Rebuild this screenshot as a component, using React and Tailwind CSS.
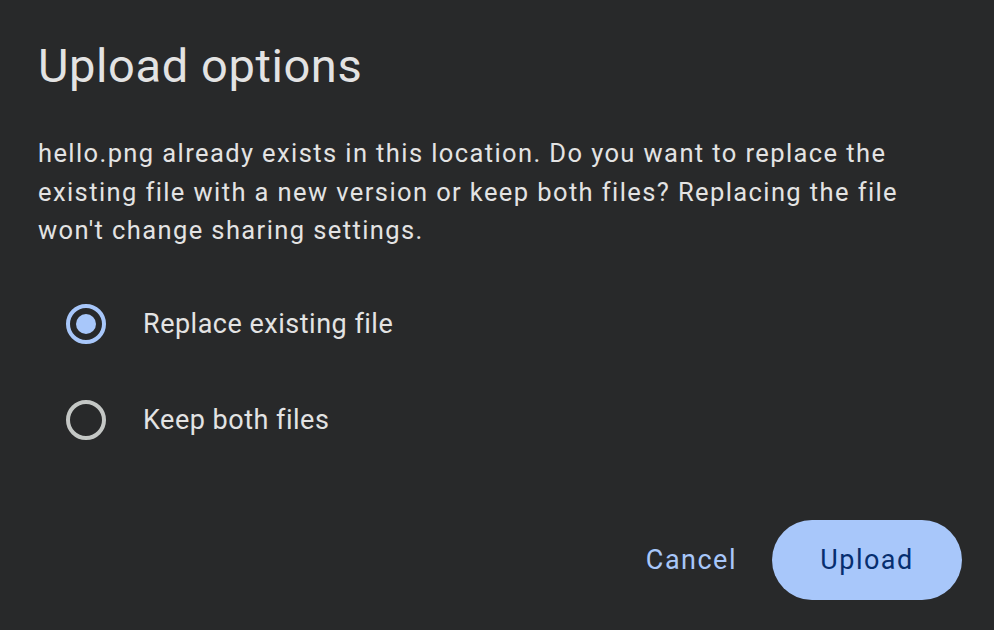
import React from "react";

function Radio({ checked }) {
  return checked ? (
    <div className="w-10 h-10 rounded-full border-4 border-[#a8c7fa] flex items-center justify-center">
      <div className="w-5 h-5 rounded-full bg-[#a8c7fa]" />
    </div>
  ) : (
    <div className="w-10 h-10 rounded-full border-4 border-[#c4c7c5]" />
  );
}

export default function App() {
  return (
    <div
      className="w-[994px] h-[630px] bg-[#28292a] text-[#e3e3e3] flex flex-col overflow-hidden"
      style={{ fontFamily: "Roboto, 'Noto Sans', sans-serif" }}
    >
      <div className="pl-[38px] pr-8 pt-[36px]">
        <h1 className="text-[47px] leading-[60px] font-normal tracking-[0.6px]">Upload options</h1>
        <p className="mt-[38px] text-[25.5px] leading-[38.5px] tracking-[1.4px] w-[880px]">
          hello.png already exists in this location. Do you want to replace the existing file with a new version or keep both files? Replacing the file won't change sharing settings.
        </p>
      </div>
      <div className="pl-[66px] mt-[54px] flex flex-col gap-[56px]">
        <label className="flex items-center gap-[37px]">
          <Radio checked />
          <span className="text-[27px] leading-[40px] tracking-[0.5px]">Replace existing file</span>
        </label>
        <label className="flex items-center gap-[37px]">
          <Radio />
          <span className="text-[27px] leading-[40px] tracking-[0.5px]">Keep both files</span>
        </label>
      </div>
      <div className="mt-auto mb-[30px] pr-8 flex justify-end items-center gap-[35px]">
        <button className="text-[#a8c7fa] text-[27px] font-normal tracking-[1.5px]">Cancel</button>
        <button className="w-[190px] h-[80px] rounded-full bg-[#a8c7fa] text-[#062e6f] text-[27px] font-normal tracking-[1.5px]">
          Upload
        </button>
      </div>
    </div>
  );
}
